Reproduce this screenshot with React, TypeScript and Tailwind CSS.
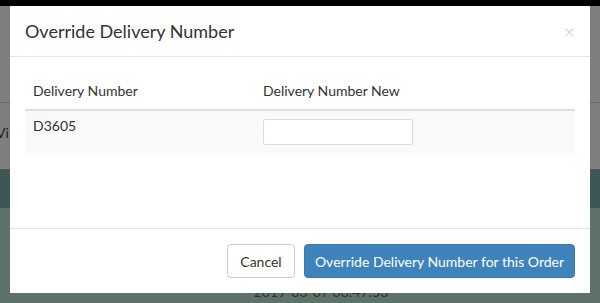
import React from "react";

const font = { fontFamily: "Lato, 'Open Sans', Arial, sans-serif" };

function Backdrop() {
  return (
    <div className="flex h-[303px] w-[600px] flex-col">
      <div className="h-[6px] bg-black" />
      <div className="relative h-[163px] bg-[#7f7f7f]">
        <div className="h-[97px] border-b border-[#6a6a6a]" />
        <div className="pl-0 pt-[20px] text-[14px] leading-[20px] text-[#222] -ml-[4px]">Vi</div>
      </div>
      <div className="h-[2px] bg-[#4b5453]" />
      <div className="h-[37px] bg-[#3d5756]" />
      <div className="flex flex-1 items-end justify-center bg-[#5f7269] pb-[4px] pl-[42px]">
        <span className="text-[14px] leading-[14px] text-[#2e3431]">2019-03-07 08:47:53</span>
      </div>
    </div>
  );
}

function Modal() {
  return (
    <div className="absolute left-[10px] top-[6px] flex w-[580px] flex-col bg-white text-[#333]">
      <div className="flex items-center justify-between border-b border-[#e5e5e5] px-[15px] py-3">
        <h4 className="text-[18px] leading-[26px] text-[#333]">Override Delivery Number</h4>
        <button className="text-[20px] leading-[20px] text-[#c8c8c8] font-light">×</button>
      </div>
      <div className="h-[171px] px-[15px] pt-[16px]">
        <table className="w-full border-collapse text-[14px] leading-[20px]">
          <thead>
            <tr className="border-b-2 border-[#dddddd]">
              <th className="w-[230px] px-2 py-2 text-left font-normal">Delivery Number</th>
              <th className="px-2 py-2 text-left font-normal">Delivery Number New</th>
            </tr>
          </thead>
          <tbody>
            <tr className="bg-[#f9f9f9]">
              <td className="px-2 pb-2 pt-[5px] align-top">D3605</td>
              <td className="px-2 py-2 align-top">
                <input
                  type="text"
                  className="block h-[26px] w-[150px] rounded-[2px] border border-[#dcdcdc] bg-white px-2 outline-none"
                />
              </td>
            </tr>
          </tbody>
        </table>
      </div>
      <div className="flex justify-end gap-[9px] border-t border-[#e5e5e5] px-[15px] py-[15px]">
        <button className="h-[34px] w-[68px] rounded-[4px] border border-[#cccccc] bg-white text-[14px] text-[#333]">
          Cancel
        </button>
        <button className="h-[34px] w-[271px] rounded-[4px] border border-[#3a78ad] bg-[#3f83bd] text-[14px] text-white">
          Override Delivery Number for this Order
        </button>
      </div>
    </div>
  );
}

export default function App() {
  return (
    <div className="relative h-[303px] w-[600px] overflow-hidden" style={font}>
      <Backdrop />
      <Modal />
    </div>
  );
}
